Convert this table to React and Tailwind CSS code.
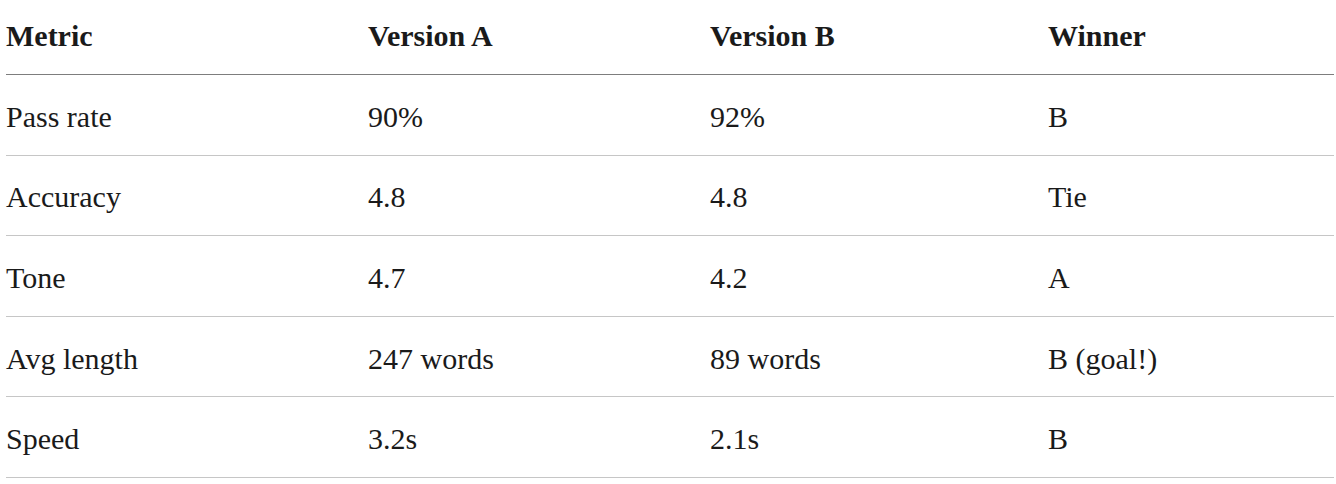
import React from "react";

const rows = [
  { metric: "Pass rate", a: "90%", b: "92%", winner: "B" },
  { metric: "Accuracy", a: "4.8", b: "4.8", winner: "Tie" },
  { metric: "Tone", a: "4.7", b: "4.2", winner: "A" },
  { metric: "Avg length", a: "247 words", b: "89 words", winner: "B (goal!)" },
  { metric: "Speed", a: "3.2s", b: "2.1s", winner: "B" },
];

const cols = "grid grid-cols-[362px_342px_338px_1fr]";

export default function App() {
  return (
    <div className="min-h-screen bg-white text-[#1a1a1a] font-['Liberation_Serif',serif] text-[30px]">
      <div className="ml-[6px] mr-[2px]">
        <div className={`${cols} h-[75px] items-center border-b border-[#7d7d7d] pb-[3px] font-bold`}>
          <div>Metric</div>
          <div>Version A</div>
          <div>Version B</div>
          <div>Winner</div>
        </div>
        {rows.map((row) => (
          <div
            key={row.metric}
            className={`${cols} h-[80.6px] items-center border-b border-[#c6c6c6] pt-[3px]`}
          >
            <div>{row.metric}</div>
            <div>{row.a}</div>
            <div>{row.b}</div>
            <div>{row.winner}</div>
          </div>
        ))}
      </div>
    </div>
  );
}
